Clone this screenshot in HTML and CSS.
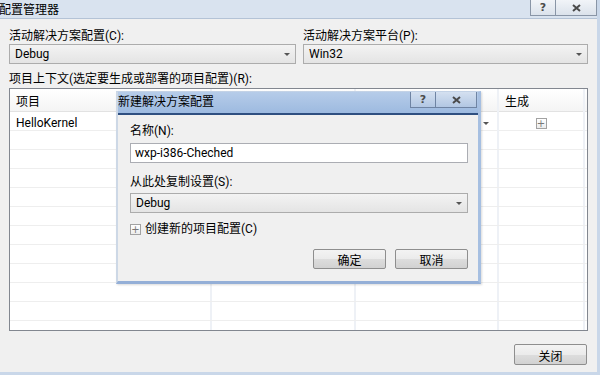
FILE: index.html
```html
<!DOCTYPE html>
<html>
<head>
    <meta charset="UTF-8">
    <title>配置管理器</title>
    <link rel="stylesheet" href="styles.css">
</head>
<body>
    <div class="window">
        <div class="titlebar">
            <span class="title">配置管理器</span>
            <div class="caption-btns">
                <span class="cap-btn help">?</span>
                <span class="cap-btn close">
                    <svg width="9" height="8" viewBox="0 0 9 8"><path d="M1 1 L8 7 M8 1 L1 7" stroke="#4a4a4a" stroke-width="2"/></svg>
                </span>
            </div>
        </div>

        <div class="content">
            <div class="top-fields">
                <div class="field">
                    <label>活动解决方案配置(C):</label>
                    <div class="combo">Debug</div>
                </div>
                <div class="field">
                    <label>活动解决方案平台(P):</label>
                    <div class="combo">Win32</div>
                </div>
            </div>

            <label class="grid-label">项目上下文(选定要生成或部署的项目配置)(R):</label>
            <div class="grid">
                <div class="row head">
                    <div class="cell">项目</div><div class="cell"></div><div class="cell"></div><div class="cell">生成</div>
                </div>
                <div class="row">
                    <div class="cell">HelloKernel</div><div class="cell"></div><div class="cell"><span class="arrow"></span></div><div class="cell center"><span class="plus-box">+</span></div>
                </div>
                <div class="row"><div class="cell"></div><div class="cell"></div><div class="cell"></div><div class="cell"></div></div>
                <div class="row"><div class="cell"></div><div class="cell"></div><div class="cell"></div><div class="cell"></div></div>
                <div class="row"><div class="cell"></div><div class="cell"></div><div class="cell"></div><div class="cell"></div></div>
                <div class="row"><div class="cell"></div><div class="cell"></div><div class="cell"></div><div class="cell"></div></div>
                <div class="row"><div class="cell"></div><div class="cell"></div><div class="cell"></div><div class="cell"></div></div>
                <div class="row"><div class="cell"></div><div class="cell"></div><div class="cell"></div><div class="cell"></div></div>
                <div class="row"><div class="cell"></div><div class="cell"></div><div class="cell"></div><div class="cell"></div></div>
                <div class="row"><div class="cell"></div><div class="cell"></div><div class="cell"></div><div class="cell"></div></div>
                <div class="row"><div class="cell"></div><div class="cell"></div><div class="cell"></div><div class="cell"></div></div>
                <div class="row"><div class="cell"></div><div class="cell"></div><div class="cell"></div><div class="cell"></div></div>
                <div class="row"><div class="cell"></div><div class="cell"></div><div class="cell"></div><div class="cell"></div></div>
            </div>

            <div class="footer">
                <button class="btn">关闭</button>
            </div>
        </div>

        <!-- 新建解决方案配置 对话框 -->
        <div class="dialog">
            <div class="dlg-title">
                <span class="title">新建解决方案配置</span>
                <div class="caption-btns">
                    <span class="cap-btn help">?</span>
                    <span class="cap-btn close">
                        <svg width="9" height="8" viewBox="0 0 9 8"><path d="M1 1 L8 7 M8 1 L1 7" stroke="#4a4a4a" stroke-width="2"/></svg>
                    </span>
                </div>
            </div>
            <div class="dlg-body">
                <label>名称(N):</label>
                <div class="textbox">wxp-i386-Cheched</div>
                <label class="copy-label">从此处复制设置(S):</label>
                <div class="combo">Debug</div>
                <div class="check-row">
                    <span class="plus-box">+</span>
                    <span>创建新的项目配置(C)</span>
                </div>
                <div class="dlg-buttons">
                    <button class="btn">确定</button>
                    <button class="btn">取消</button>
                </div>
            </div>
        </div>
    </div>
</body>
</html>
```

FILE: styles.css
```css
body {
    margin: 0;
    width: 600px;
    height: 375px;
    overflow: hidden;
    background: #c9d7e9;
    font-family: Roboto, "Noto Sans CJK SC", sans-serif;
    font-size: 12px;
    color: #000;
}

.window {
    position: relative;
    width: 597px;
    height: 372px;
    background: #f0f0f0;
    display: flex;
    flex-direction: column;
}

.titlebar {
    height: 18px;
    background: #d9e3ef;
    border-bottom: 1px solid #b4c3d6;
    display: flex;
    align-items: flex-start;
}

.titlebar .title {
    margin-left: -1px;
    line-height: 21px;
}

.caption-btns {
    margin-left: auto;
    display: flex;
}

.cap-btn {
    height: 15px;
    border: 1px solid #8995a6;
    border-top: none;
    background: linear-gradient(#f1f4f8, #dbe2eb);
    display: flex;
    align-items: center;
    justify-content: center;
    font-weight: bold;
    font-size: 11px;
    color: #4a4a4a;
    font-family: "DejaVu Sans", sans-serif;
}

.cap-btn.help {
    width: 24px;
}

.cap-btn.close {
    width: 40px;
    border-left: none;
}

.content {
    padding: 0 9px 0 9px;
    display: flex;
    flex-direction: column;
}

.top-fields {
    display: grid;
    grid-template-columns: 287px 285px;
    column-gap: 7px;
    margin-top: 9px;
}

label {
    display: block;
    line-height: 16px;
}

.combo {
    position: relative;
    height: 18px;
    line-height: 19px;
    border: 1px solid #acacac;
    background: linear-gradient(#f3f3f3, #e4e4e4);
    padding-left: 5px;
}

.combo::after {
    content: "";
    position: absolute;
    right: 5px;
    top: 8px;
    border-left: 3px solid transparent;
    border-right: 3px solid transparent;
    border-top: 3px solid #555;
}

.grid-label {
    margin-top: 7px;
    line-height: 17px;
}

.grid {
    height: 241px;
    border: 1px solid #828790;
    background: #fff;
    overflow: hidden;
}

.row {
    display: grid;
    grid-template-columns: 202px 144px 143px 86px;
    height: 18px;
    border-bottom: 1px solid #eeeeee;
}

.row.head {
    height: 22px;
    background: linear-gradient(#ffffff, #f4f4f4);
    border-bottom: 1px solid #e2e2e2;
}

.cell {
    border-right: 2px solid #eef1f6;
    padding: 2px 0 0 6px;
    line-height: 18px;
    display: flex;
    align-items: center;
}

.row.head .cell {
    line-height: 22px;
}

.cell.center {
    justify-content: center;
    padding-left: 0;
}

.arrow {
    margin-left: auto;
    margin-right: 8px;
    border-left: 3px solid transparent;
    border-right: 3px solid transparent;
    border-top: 3px solid #555;
}

.plus-box {
    width: 9px;
    height: 9px;
    border: 1px solid #a2a2a2;
    background: linear-gradient(#ffffff, #ececec);
    color: #777;
    font-size: 10px;
    line-height: 9px;
    text-align: center;
    font-family: "DejaVu Sans", sans-serif;
}

.footer {
    display: flex;
    justify-content: flex-end;
    margin-top: 13px;
    padding-right: 1px;
}

.btn {
    width: 73px;
    height: 21px;
    border: 1px solid #8e8e8e;
    border-radius: 2px;
    background: linear-gradient(#f3f3f3, #ebebeb 50%, #dddddd 51%, #d2d2d2);
    font-family: "Noto Sans CJK SC", sans-serif;
    font-size: 12px;
    color: #000;
    padding: 1px 0 0;
}

/* dialog */
.dialog {
    position: absolute;
    left: 116px;
    top: 91px;
    width: 360px;
    height: 189px;
    border-left: 2px solid #cdd8e6;
    border-right: 3px solid #a6bfe1;
    border-bottom: 3px solid #94afd7;
    border-top: 1px solid #c3d2e6;
    background: #f0f0f0;
    box-shadow: 1px 1px 2px rgba(0, 0, 0, 0.15);
}

.dlg-title {
    height: 21px;
    background: linear-gradient(#b6cce9, #9dbae0);
    border-bottom: 2px solid #2f4f80;
    display: flex;
    align-items: flex-start;
}

.dlg-title .title {
    line-height: 21px;
}

.dlg-title .caption-btns {
    margin-right: 1px;
}

.dlg-title .cap-btn {
    height: 15px;
    border-color: #6f84a3;
    background: linear-gradient(#d4e0f0, #b2c7e3);
}

.dlg-body {
    padding: 8px 10px 0 12px;
}

.textbox {
    margin-top: 4px;
    height: 18px;
    line-height: 19px;
    border: 1px solid #abadb3;
    background: #fff;
    padding-left: 4px;
}

.copy-label {
    margin-top: 11px;
}

.dlg-body .combo {
    margin-top: 3px;
}

.check-row {
    margin-top: 8px;
    display: flex;
    align-items: center;
    gap: 4px;
    line-height: 16px;
}

.dlg-buttons {
    margin-top: 12px;
    display: flex;
    justify-content: flex-end;
    gap: 9px;
}

.dlg-buttons .btn {
    height: 20px;
}
```
